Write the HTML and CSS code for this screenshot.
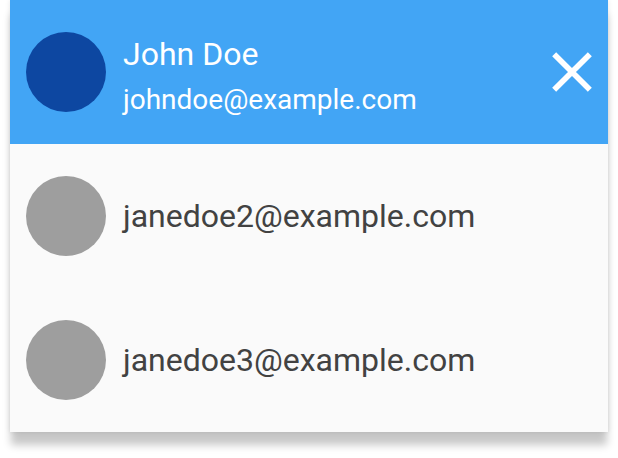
FILE: index.html
```html
<!DOCTYPE html>
<html>
<head>
<meta charset="utf-8">
<link rel="stylesheet" href="styles.css">
</head>
<body>
<div class="card">
  <div class="header">
    <div class="avatar avatar-main"></div>
    <div class="info">
      <div class="name">John Doe</div>
      <div class="email">johndoe@example.com</div>
    </div>
    <svg class="close" viewBox="0 0 24 24" width="68" height="68"><path fill="#fff" d="M19 6.41L17.59 5 12 10.59 6.41 5 5 6.41 10.59 12 5 17.59 6.41 19 12 13.41 17.59 19 19 17.59 13.41 12z"/></svg>
  </div>
  <div class="row">
    <div class="avatar avatar-other"></div>
    <div class="row-text">janedoe2@example.com</div>
  </div>
  <div class="row">
    <div class="avatar avatar-other"></div>
    <div class="row-text">janedoe3@example.com</div>
  </div>
</div>
</body>
</html>
```
FILE: styles.css
```css
html, body {
  margin: 0;
  padding: 0;
  background: #ffffff;
}
body {
  font-family: Roboto, "Liberation Sans", sans-serif;
  padding-bottom: 26px;
}
.card {
  margin-left: 10px;
  width: 598px;
  background: #fafafa;
  box-shadow: 0 14px 8px -1px rgba(0,0,0,0.22), 0 0 5px rgba(0,0,0,0.1);
}
.header {
  height: 144px;
  background: #42a5f5;
  display: flex;
  align-items: center;
  padding-left: 16px;
  color: #ffffff;
}
.avatar {
  width: 80px;
  height: 80px;
  border-radius: 50%;
  flex: none;
}
.avatar-main { background: #0d47a1; }
.avatar-other { background: #9e9e9e; }
.info {
  margin-left: 17px;
  padding-top: 8px;
  flex: 1;
  display: flex;
  flex-direction: column;
}
.name {
  font-size: 32px;
  line-height: 38px;
}
.email {
  font-size: 28px;
  line-height: 34px;
  margin-top: 10px;
}
.close {
  margin-right: 2px;
  flex: none;
}
.row {
  height: 144px;
  display: flex;
  align-items: center;
  padding-left: 16px;
}
.row-text {
  margin-left: 17px;
  font-size: 32px;
  color: #424242;
}
```
